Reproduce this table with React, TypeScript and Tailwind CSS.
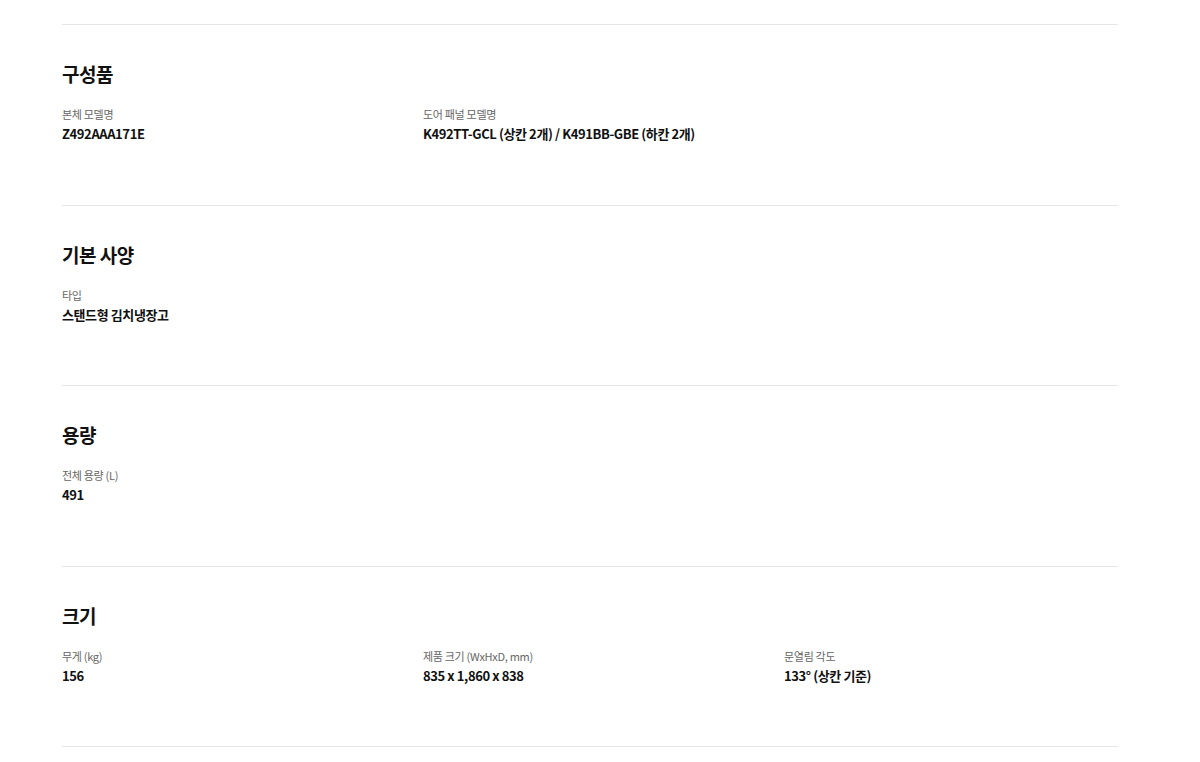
type Spec = { label: string; value: string };

type Section = { title: string; specs: Spec[] };

const sections: Section[] = [
  {
    title: "구성품",
    specs: [
      { label: "본체 모델명", value: "Z492AAA171E" },
      { label: "도어 패널 모델명", value: "K492TT-GCL (상칸 2개) / K491BB-GBE (하칸 2개)" },
    ],
  },
  {
    title: "기본 사양",
    specs: [{ label: "타입", value: "스탠드형 김치냉장고" }],
  },
  {
    title: "용량",
    specs: [{ label: "전체 용량 (L)", value: "491" }],
  },
  {
    title: "크기",
    specs: [
      { label: "무게 (kg)", value: "156" },
      { label: "제품 크기 (WxHxD, mm)", value: "835 x 1,860 x 838" },
      { label: "문열림 각도", value: "133° (상칸 기준)" },
    ],
  },
];

export default function App() {
  return (
    <div
      className="min-h-screen bg-white pt-[24px]"
      style={{ fontFamily: '"Noto Sans CJK KR", "Noto Sans", sans-serif' }}
    >
      <div className="ml-[62px] w-[1056px]">
        {sections.map((s) => (
          <section key={s.title} className="border-t border-[#e6e6e6] pt-[37px] pb-[60.5px]">
            <h2 className="text-[19px] leading-[24px] font-bold tracking-[-0.5px] text-[#111]">{s.title}</h2>
            <div className="mt-[20px] grid grid-cols-3 gap-x-[27px]">
              {s.specs.map((sp) => (
                <div key={sp.label}>
                  <div className="text-[11px] leading-[16px] tracking-[-0.3px] text-[#666]">{sp.label}</div>
                  <div className="mt-[2px] text-[13px] leading-[20px] font-bold tracking-[-0.4px] text-[#111]">
                    {sp.value}
                  </div>
                </div>
              ))}
            </div>
          </section>
        ))}
        <div className="border-t border-[#e6e6e6]" />
      </div>
    </div>
  );
}
